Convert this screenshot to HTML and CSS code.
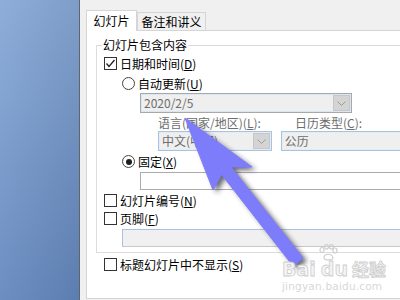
FILE: index.html
```html
<!DOCTYPE html>
<html lang="zh-CN">
<head>
<meta charset="utf-8">
<link rel="stylesheet" href="styles.css">
</head>
<body>
<div class="screen">
  <div class="desk"></div>
  <div class="dialog">
    <div class="tabs">
      <div class="tab active">幻灯片</div>
      <div class="tab">备注和讲义</div>
    </div>
    <div class="panel">
      <div class="group">
        <div class="legend">幻灯片包含内容</div>
        <div class="row r-date">
          <span class="cb"><svg width="13" height="13" viewBox="0 0 13 13"><polyline points="2.5,6.5 5,9.5 10.5,3" fill="none" stroke="#222" stroke-width="1.3"/></svg></span>
          <span class="lbl">日期和时间(<u>D</u>)</span>
        </div>
        <div class="row r-auto indent1">
          <span class="rb"></span>
          <span class="lbl">自动更新(<u>U</u>)</span>
        </div>
        <div class="combo date-combo">
          <span class="ctext">2020/2/5</span>
          <span class="dd"><svg width="9" height="5" viewBox="0 0 9 5"><polyline points="0.5,0.5 4.5,4.5 8.5,0.5" fill="none" stroke="#9a9a9a" stroke-width="1"/></svg></span>
        </div>
        <div class="labels">
          <span class="glabel l1">语言(国家/地区)(<u>L</u>):</span>
          <span class="glabel">日历类型(<u>C</u>):</span>
        </div>
        <div class="combos">
          <div class="combo lang-combo">
            <span class="ctext">中文(中国)</span>
            <span class="dd"><svg width="9" height="5" viewBox="0 0 9 5"><polyline points="0.5,0.5 4.5,4.5 8.5,0.5" fill="none" stroke="#9a9a9a" stroke-width="1"/></svg></span>
          </div>
          <div class="combo cal-combo">
            <span class="ctext">公历</span>
          </div>
        </div>
        <div class="row r-fixed indent1">
          <span class="rb on"></span>
          <span class="lbl">固定(<u>X</u>)</span>
        </div>
        <div class="textbox fixed-box"></div>
        <div class="row r-num">
          <span class="cb"></span>
          <span class="lbl">幻灯片编号(<u>N</u>)</span>
        </div>
        <div class="row r-foot">
          <span class="cb"></span>
          <span class="lbl">页脚(<u>F</u>)</span>
        </div>
        <div class="textbox foot-box"></div>
      </div>
      <div class="row r-title">
        <span class="cb"></span>
        <span class="lbl">标题幻灯片中不显示(<u>S</u>)</span>
      </div>
    </div>
  </div>

  <svg class="arrow" width="400" height="300" viewBox="0 0 400 300">
    <defs>
      <filter id="blur" x="-20%" y="-20%" width="140%" height="140%">
        <feGaussianBlur stdDeviation="2.5"/>
      </filter>
    </defs>
    <polygon transform="translate(4,3)" filter="url(#blur)" fill="#2a2a3a" fill-opacity="0.7"
      points="185,118 252,167 231,167 303,258 293,266 221.6,174.4 213,190"/>
    <polygon fill="#7d7dfc" stroke="#7d7dfc" stroke-width="1" stroke-linejoin="round"
      points="185,118 252,167 231,167 303,258 293,266 221.6,174.4 213,190"/>
  </svg>

  <div class="watermark">
    <svg class="paw" width="20" height="17" viewBox="0 0 20 17">
      <g fill="none" stroke="#cfcfcf" stroke-width="1.2">
        <ellipse cx="4" cy="6" rx="2" ry="2.5"/>
        <ellipse cx="8.5" cy="2.8" rx="2" ry="2.3"/>
        <ellipse cx="13.5" cy="2.8" rx="2" ry="2.3"/>
        <ellipse cx="17" cy="6.5" rx="2" ry="2.5"/>
        <path d="M6 14 C6 9 14 9 15 14 C15 16.5 6 16.5 6 14 Z"/>
      </g>
    </svg>
    <div class="wm-line">
      <span class="wm-bai">Bai</span><span class="wm-du">du</span><span class="wm-jy">经验</span>
    </div>
    <div class="wm-url">jingyan.baidu.com</div>
  </div>
</div>
</body>
</html>
```

FILE: styles.css
```css
body {
  margin: 0;
}

.screen {
  position: relative;
  width: 400px;
  height: 300px;
  overflow: hidden;
  display: flex;
  font-family: "Noto Sans CJK SC", "Noto Sans", sans-serif;
  font-size: 12px;
  color: #000;
}

.desk {
  flex: none;
  width: 79px;
  background:
    linear-gradient(to right, rgba(255, 255, 255, 0.06), rgba(0, 0, 0, 0.07)),
    linear-gradient(to bottom, #88a9d7, #6387bd);
  border-right: 1px solid #5f6570;
}

.dialog {
  flex: 1;
  min-width: 0;
  background: #f0f0f0;
  padding-left: 6px;
  display: flex;
  flex-direction: column;
}

.tabs {
  display: flex;
  align-items: flex-end;
  height: 20px;
  margin-top: 10px;
  position: relative;
  z-index: 1;
}

.tab {
  box-sizing: border-box;
  height: 18px;
  width: 69px;
  border: 1px solid #d5d5d5;
  border-bottom: none;
  background: #f0f0f0;
  text-align: center;
  line-height: 17px;
}

.tab.active {
  width: 51px;
  height: 21px;
  margin-bottom: -1px;
  background: #fff;
  line-height: 19px;
}

.panel {
  box-sizing: border-box;
  width: 330px;
  height: 269px;
  background: #fff;
  border: 1px solid #d5d5d5;
}

.group {
  position: relative;
  margin: 14px 0 0 9px;
  border: 1px solid #dcdcdc;
  padding: 0 0 5px 7px;
}

.legend {
  position: absolute;
  top: -8px;
  left: 5px;
  padding: 0 1px;
  background: #fff;
  line-height: 14px;
}

.row {
  display: flex;
  align-items: center;
  height: 13px;
  line-height: 13px;
  white-space: nowrap;
}

.indent1 {
  margin-left: 18px;
}

.r-date { margin-top: 11px; }
.r-auto { margin-top: 7px; }
.r-fixed { margin-top: 4px; }
.r-num { margin-top: 4px; }
.r-foot { margin-top: 5px; }
.r-title { margin: 5px 0 0 17px; }

.cb {
  box-sizing: border-box;
  flex: none;
  width: 13px;
  height: 13px;
  border: 1px solid #333;
  background: #fff;
  position: relative;
}

.cb svg {
  display: block;
  margin: -1px;
}

.rb {
  box-sizing: border-box;
  flex: none;
  width: 13px;
  height: 13px;
  border: 1px solid #444;
  border-radius: 50%;
  background: #fff;
  display: flex;
  align-items: center;
  justify-content: center;
}

.rb.on::after {
  content: "";
  width: 6px;
  height: 6px;
  border-radius: 50%;
  background: #1e1e1e;
}

.lbl {
  margin-left: 3px;
}

.combo {
  box-sizing: border-box;
  display: flex;
  align-items: center;
  height: 20px;
  border: 1px solid #a9c2df;
  box-shadow: inset 0 0 0 1px #e4ecf6;
  background: #efefef;
  color: #6d6d6d;
  white-space: nowrap;
  overflow: hidden;
}

.ctext {
  flex: 1;
  padding-left: 3px;
  line-height: 18px;
}

.dd {
  flex: none;
  box-sizing: border-box;
  width: 17px;
  height: 16px;
  margin-right: 1px;
  background: #d4d4d4;
  border: 1px solid #c6c6c6;
  display: flex;
  align-items: center;
  justify-content: center;
}

.date-combo {
  width: 212px;
  margin: 3px 0 0 36px;
  border-color: #a8a8a8;
  box-shadow: inset 0 0 0 1px #dbe6f3;
}

.labels {
  display: flex;
  margin: 4px 0 0 54px;
  height: 12px;
  line-height: 12px;
  color: #6d6d6d;
  white-space: nowrap;
}

.glabel.l1 {
  width: 137px;
}

.combos {
  display: flex;
  gap: 9px;
  margin: 2px 0 0 54px;
}

.lang-combo {
  width: 128px;
}

.cal-combo {
  width: 150px;
}

.textbox {
  box-sizing: border-box;
  height: 18px;
  width: 300px;
}

.fixed-box {
  margin: 4px 0 0 36px;
  border: 1px solid #ababab;
  background: #fff;
}

.foot-box {
  margin: 4px 0 0 18px;
  border: 1px solid #a9c2df;
  border-bottom-color: #c8c8c8;
  background: #f0f0f0;
}

.arrow {
  position: absolute;
  left: 0;
  top: 0;
  pointer-events: none;
}

.watermark {
  position: absolute;
  left: 282px;
  top: 244px;
  width: 115px;
  font-family: "DejaVu Sans", sans-serif;
  color: #f4f4f4;
  pointer-events: none;
}

.paw {
  display: block;
  margin-left: 36px;
}

.wm-line {
  display: flex;
  align-items: baseline;
  height: 20px;
  margin-top: -2px;
  white-space: nowrap;
}

.wm-bai,
.wm-du {
  font-size: 19px;
  font-weight: bold;
  -webkit-text-stroke: 0.8px #cdcdcd;
  line-height: 20px;
}

.wm-du {
  margin-left: 5px;
}

.wm-jy {
  font-family: "Noto Sans CJK SC", sans-serif;
  font-size: 17px;
  font-weight: bold;
  margin-left: 4px;
  -webkit-text-stroke: 0.8px #cdcdcd;
  line-height: 20px;
}

.wm-url {
  font-size: 10.5px;
  color: #d8d8d8;
  line-height: 12px;
  margin-top: 1px;
  letter-spacing: 0.2px;
}
```
